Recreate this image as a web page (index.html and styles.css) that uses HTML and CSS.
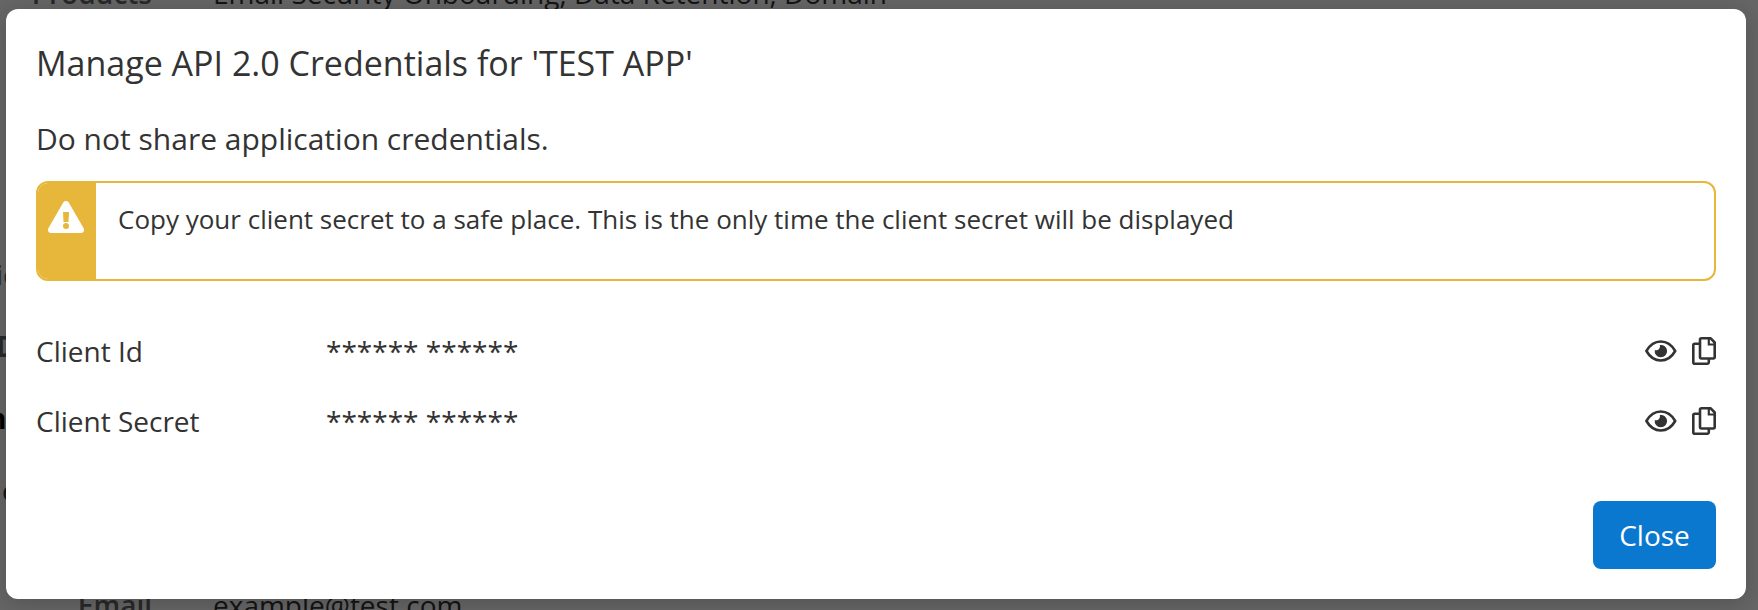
FILE: index.html
```html
<!DOCTYPE html>
<html lang="en">
<head>
    <meta charset="UTF-8">
    <meta name="viewport" content="width=device-width, initial-scale=1.0">
    <title>Manage API 2.0 Credentials</title>
    <link rel="stylesheet" href="styles.css">
</head>
<body>
    <!-- Application details behind the dialog -->
    <div class="page">
        <div class="detail products">
            <span class="label">Products</span>
            <span class="value">Email Security Onboarding, Data Retention, Domain</span>
        </div>
        <div class="column">
            <p class="crumb">ic</p>
            <p class="crumb heading">D</p>
            <p class="crumb name">n</p>
            <p class="crumb text">c</p>
        </div>
        <div class="detail">
            <span class="label">Email</span>
            <span class="value">example@test.com</span>
        </div>
    </div>

    <div class="backdrop">
        <div class="modal" role="dialog" aria-labelledby="modalTitle">
            <h1 id="modalTitle">Manage API 2.0 Credentials for 'TEST APP'</h1>
            <p class="intro">Do not share application credentials.</p>

            <div class="alert">
                <div class="alert-icon">
                    <svg width="36" height="32" viewBox="0 0 36 32">
                        <path fill="#fff" d="M15.1 1.7a3.3 3.3 0 0 1 5.8 0l14.6 25.4c1.3 2.3.1 4.9-2.4 4.9H2.9C.4 32-.8 29.4.5 27.1z"/>
                        <path fill="#e6b73a" d="M15 11h6l-.5 10h-5z"/>
                        <circle fill="#e6b73a" cx="18" cy="25" r="3"/>
                    </svg>
                </div>
                <p class="alert-text">Copy your client secret to a safe place. This is the only time the client secret will be displayed</p>
            </div>

            <div class="row">
                <span class="row-label">Client Id</span>
                <span class="row-value">****** ******</span>
                <button class="icon-button" aria-label="Show client id"><svg width="32" height="22"><use href="#eye"/></svg></button>
                <button class="icon-button" aria-label="Copy client id"><svg width="24" height="28"><use href="#copy"/></svg></button>
            </div>
            <div class="row">
                <span class="row-label">Client Secret</span>
                <span class="row-value">****** ******</span>
                <button class="icon-button" aria-label="Show client secret"><svg width="32" height="22"><use href="#eye"/></svg></button>
                <button class="icon-button" aria-label="Copy client secret"><svg width="24" height="28"><use href="#copy"/></svg></button>
            </div>

            <div class="actions">
                <button class="close">Close</button>
            </div>
        </div>
    </div>

    <svg class="sprite" width="0" height="0">
        <symbol id="eye" viewBox="0 0 32 22">
            <path fill="none" stroke="#333" stroke-width="2.6" stroke-linejoin="round" d="M1.4 11C5 4.7 10 1.5 15.8 1.5S26.6 4.7 30.2 11C26.6 17.3 21.6 20.5 15.8 20.5S5 17.3 1.4 11z"/>
            <path fill="#333" d="M14.8 5a6.2 6.2 0 1 1-5 5c2.2 1.2 6-1 5-5z"/>
        </symbol>
        <symbol id="copy" viewBox="0 0 24 28">
            <path fill="none" stroke="#333" stroke-width="2.6" stroke-linejoin="round" d="M8 6.7H2.8a1.5 1.5 0 0 0-1.5 1.5v17a1.5 1.5 0 0 0 1.500 1.500h12.500a1.500 1.500 0 0 0 1.500-1.500V22"/>
            <path fill="none" stroke="#333" stroke-width="2.6" stroke-linejoin="round" d="M9.500 1.300h9.200l4 4.200v14.500a1.500 1.500 0 0 1-1.500 1.500H9.500a1.500 1.500 0 0 1-1.500-1.500V2.800a1.500 1.500 0 0 1 1.500-1.500z"/>
            <path fill="none" stroke="#333" stroke-width="2.2" d="M16.800 1.500V7.500H22.500"/>
        </symbol>
    </svg>
</body>
</html>
```

FILE: styles.css
```css
/* General Reset */
* {
    margin: 0;
    padding: 0;
    box-sizing: border-box;
}

body {
    font-family: 'Open Sans', sans-serif;
    font-size: 28px;
    line-height: 38px;
    color: #333333;
    background-color: #ffffff;
}

/* Page behind the dialog */
.page {
    height: 610px;
    overflow: hidden;
    white-space: nowrap;
}

.detail {
    display: flex;
    gap: 61px;
}

.products {
    margin-top: -26px;
}

.label {
    width: 152px;
    text-align: right;
    font-weight: 600;
    color: #686868;
}

.value {
    color: #333333;
}

.column {
    height: 574px;
    padding-top: 243px;
}

.crumb {
    height: 72px;
    margin-left: -4px;
    color: #686868;
}

.heading {
    font-weight: 700;
}

.name {
    margin-left: -12px;
    font-weight: 700;
    color: #000000;
}

.text {
    margin-left: 2px;
    color: #333333;
}

/* Dialog */
.backdrop {
    position: absolute;
    inset: 0;
    padding: 9px 12px 11px 6px;
    background-color: rgba(0, 0, 0, 0.6);
}

.modal {
    height: 590px;
    padding: 29px 30px 30px;
    border-radius: 12px;
    background-color: #ffffff;
    box-shadow: 0 4px 24px rgba(0, 0, 0, 0.2);
}

h1 {
    font-size: 34px;
    font-weight: 400;
    line-height: 50px;
}

.intro {
    margin: 30px 0 22px;
    font-size: 30px;
    line-height: 41px;
}

.alert {
    display: flex;
    height: 100px;
    margin-bottom: 35px;
    border: 2px solid #e6b73a;
    border-radius: 12px;
    overflow: hidden;
}

.alert-icon {
    width: 58px;
    padding: 18px 0 0 10px;
    background-color: #e6b73a;
}

.alert-text {
    padding: 17px 22px;
    font-size: 26px;
    line-height: 38px;
}

.row {
    display: flex;
    align-items: center;
    height: 70px;
}

.row-label {
    width: 290px;
}

.row-value {
    flex: 1;
}

.icon-button {
    display: flex;
    margin-left: 15px;
    border: none;
    background: none;
    cursor: pointer;
}

.actions {
    display: flex;
    justify-content: flex-end;
    margin-top: 45px;
}

.close {
    width: 123px;
    height: 68px;
    border: none;
    border-radius: 8px;
    font: inherit;
    color: #ffffff;
    background-color: #0b78d0;
    cursor: pointer;
}

.sprite {
    position: absolute;
}
```
